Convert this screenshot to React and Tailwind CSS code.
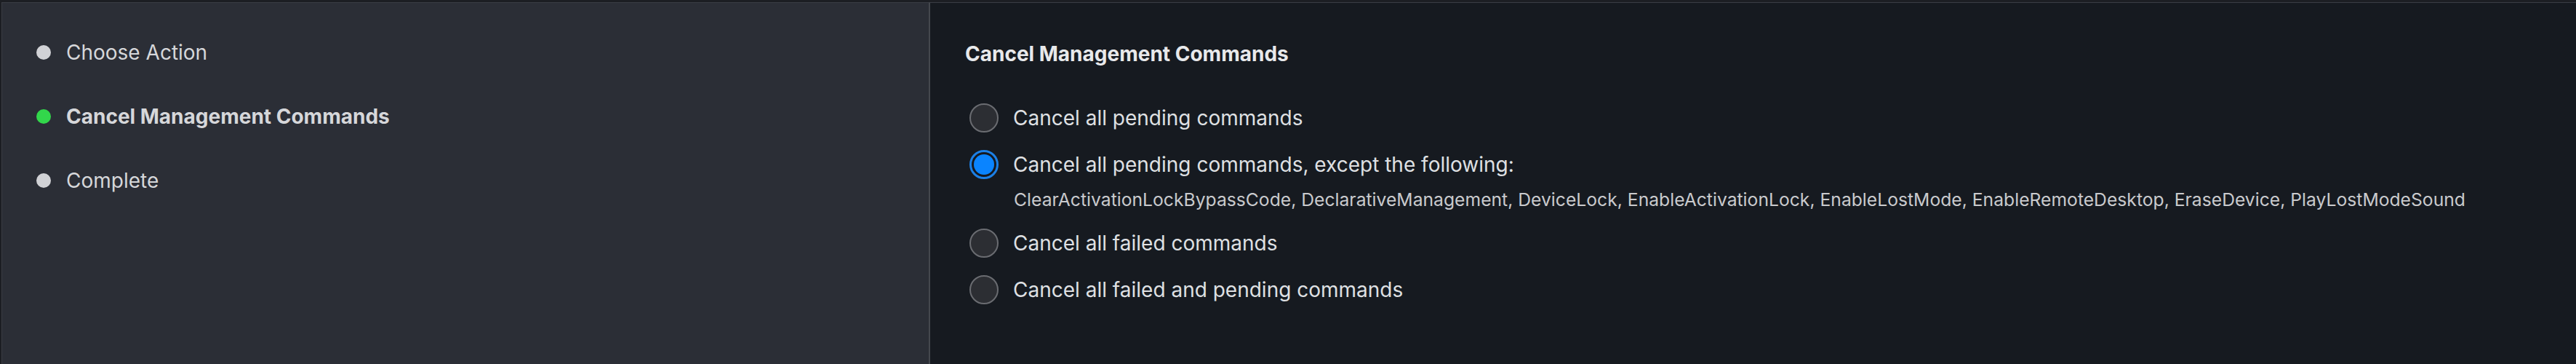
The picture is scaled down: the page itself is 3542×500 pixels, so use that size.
import React, { useState } from 'react';

const steps = [
    { label: 'Choose Action', state: 'idle' },
    { label: 'Cancel Management Commands', state: 'active' },
    { label: 'Complete', state: 'idle' },
];

const options = [
    { id: 'pending', label: 'Cancel all pending commands' },
    {
        id: 'except',
        label: 'Cancel all pending commands, except the following:',
        note: 'ClearActivationLockBypassCode, DeclarativeManagement, DeviceLock, EnableActivationLock, EnableLostMode, EnableRemoteDesktop, EraseDevice, PlayLostModeSound',
    },
    { id: 'failed', label: 'Cancel all failed commands' },
    { id: 'both', label: 'Cancel all failed and pending commands' },
];

const Radio = ({ checked }) => (
    checked ? (
        <span className="w-[40px] h-[40px] shrink-0 rounded-full border-[3px] border-[#1c80e6] bg-[#16191f] flex items-center justify-center">
            <span className="w-[28px] h-[28px] rounded-full bg-[#0a84ff]"></span>
        </span>
    ) : (
        <span className="w-[40px] h-[40px] shrink-0 rounded-full border-2 border-[#6a6c71] bg-[#2c2e33]"></span>
    )
);

const App = () => {
    const [selected, setSelected] = useState('except');

    return (
        <div className="flex w-[3542px] h-[500px] bg-[#1c1e23] pt-[3px] pl-[2px] font-['Inter','Noto_Sans',sans-serif] overflow-hidden">
            {/* Steps */}
            <div className="w-[1277px] shrink-0 bg-[#2b2e36] border-t border-l border-[#3a3d44] border-r-2 border-r-[#45484e] pl-[47px] pt-[50px] flex flex-col gap-[52px]">
                {steps.map((step) => (
                    <div key={step.label} className="flex items-center h-[36px] gap-[21px]">
                        <span className={`w-[20px] h-[20px] rounded-full ${step.state === 'active' ? 'bg-[#32d74b]' : 'bg-[#d1d2d6]'}`}></span>
                        <span className={`text-[28px] leading-[36px] text-[#d6d7da] ${step.state === 'active' ? 'font-bold' : 'font-normal'}`}>
                            {step.label}
                        </span>
                    </div>
                ))}
            </div>

            {/* Content */}
            <div className="flex-1 bg-[#161a20] border-t border-[#3a3d44] pl-[48px] pt-[52px]">
                <h2 className="text-[28px] leading-[36px] font-bold text-[#e8e9eb]">Cancel Management Commands</h2>

                <div className="mt-[50px] ml-[6px] flex flex-col gap-[24px]">
                    {options.map((opt) => (
                        <div key={opt.id} className="flex flex-col">
                            <label className="flex items-center gap-[20px] cursor-pointer" onClick={() => setSelected(opt.id)}>
                                <Radio checked={selected === opt.id} />
                                <span className="text-[28px] leading-[40px] text-[#dfe0e3]">{opt.label}</span>
                            </label>
                            {opt.note && (
                                <p className="mt-[13px] ml-[61px] text-[24.7px] leading-[31px] text-[#c9cacd] whitespace-nowrap">{opt.note}</p>
                            )}
                        </div>
                    ))}
                </div>
            </div>
        </div>
    );
};

export default App;
